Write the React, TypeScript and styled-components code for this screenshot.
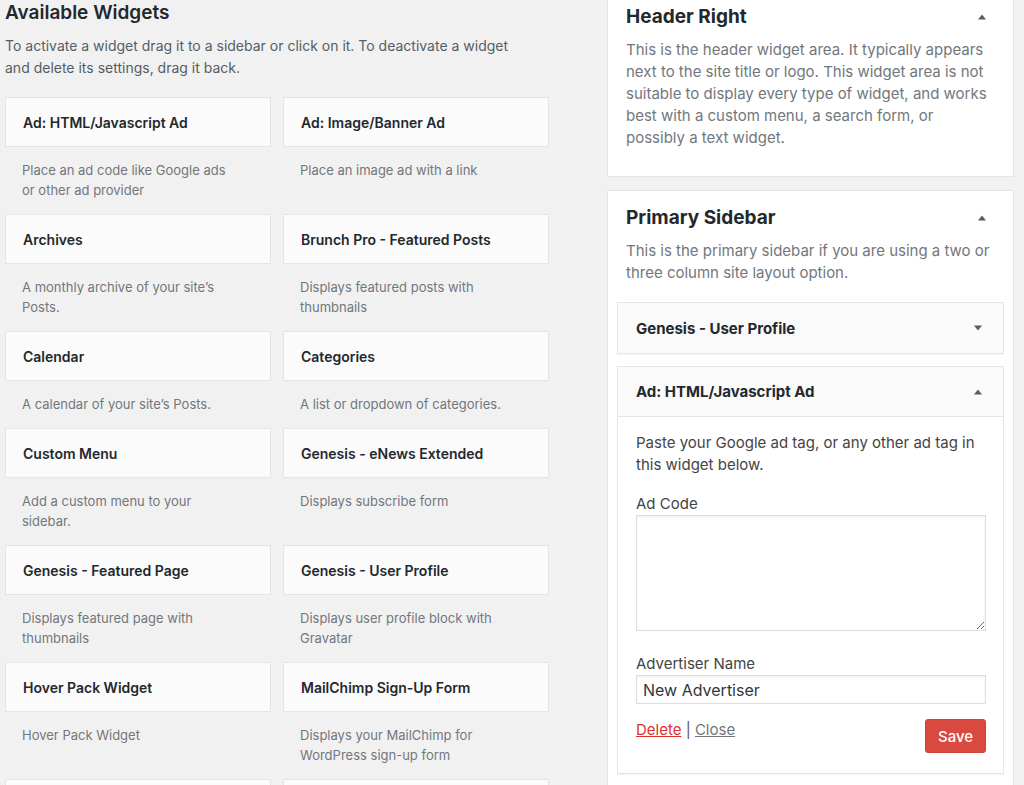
import React from "react";
import styled, { createGlobalStyle } from "styled-components";

const Global = createGlobalStyle`
  html, body { margin: 0; padding: 0; background: #f1f1f1; }
  body { font-family: Inter, "Noto Sans", "Liberation Sans", sans-serif; color: #23282d; overflow: hidden; height: 785px; }
  * { box-sizing: border-box; }
`;

const Page = styled.div`
  display: flex;
  align-items: flex-start;
  padding-left: 5px;
  height: 785px;
  overflow: hidden;
`;

const LeftCol = styled.div`
  width: 544px;
  flex: none;
`;

const Heading = styled.h2`
  margin: 0;
  font-size: 19px;
  line-height: 26px;
  font-weight: 600;
  color: #23282d;
`;

const Intro = styled.p`
  margin: 9px 0 18px;
  max-width: 520px;
  font-size: 14px;
  line-height: 22px;
  color: #555d66;
`;

const Grid = styled.div`
  display: grid;
  grid-template-columns: 266px 266px;
  column-gap: 12px;
`;

const Item = styled.div`
  display: flex;
  flex-direction: column;
`;

const Card = styled.div`
  height: 50px;
  background: #fbfbfb;
  border: 1px solid #e5e5e5;
  display: flex;
  align-items: center;
  padding: 0 17px;
  font-weight: 600;
  font-size: 14px;
  color: #23282d;
`;

const ItemDesc = styled.div`
  padding: 13px 37px 14px 17px;
  font-size: 13px;
  line-height: 20px;
  color: #72777c;
  min-height: 20px;
`;

const RightCol = styled.div`
  margin-left: 58px;
  margin-top: -11px;
  width: 407px;
  flex: none;
  display: flex;
  flex-direction: column;
  gap: 13px;
`;

const Panel = styled.div<{ $tail: number }>`
  background: #fff;
  border: 1px solid #e5e5e5;
  padding: 15px 9px ${(p) => p.$tail}px;
`;

const PanelHead = styled.div`
  display: flex;
  align-items: center;
  justify-content: space-between;
  padding: 0 17px 0 9px;
`;

const PanelTitle = styled.h3`
  margin: 0;
  font-size: 19px;
  line-height: 24px;
  font-weight: 700;
  color: #23282d;
`;

const PanelDesc = styled.p`
  margin: 10px 0 0;
  padding: 0 9px;
  font-size: 15px;
  line-height: 22px;
  color: #72777c;
`;

const WidgetList = styled.div`
  margin-top: 18px;
  display: flex;
  flex-direction: column;
  gap: 12px;
`;

const Widget = styled.div`
  border: 1px solid #e5e5e5;
  background: #fff;
  box-shadow: 0 1px 1px rgba(0, 0, 0, 0.04);
`;

const WidgetHead = styled.div<{ $open?: boolean }>`
  height: 50px;
  background: #fafafa;
  display: flex;
  align-items: center;
  justify-content: space-between;
  padding: 0 20px 0 18px;
  font-size: 15px;
  font-weight: 700;
  color: #23282d;
  border-bottom: ${(p) => (p.$open ? "1px solid #e5e5e5" : "none")};
`;

const WidgetBody = styled.div`
  padding: 15px 17px 20px 18px;
  display: flex;
  flex-direction: column;
`;

const BodyText = styled.p`
  margin: 0;
  font-size: 15px;
  line-height: 22px;
  color: #444;
`;

const Label = styled.label<{ $gap: number }>`
  display: block;
  margin-top: ${(p) => p.$gap}px;
  font-size: 15px;
  line-height: 22px;
  color: #444;
`;

const TextArea = styled.textarea`
  width: 350px;
  height: 116px;
  border: 1px solid #ddd;
  box-shadow: inset 0 1px 2px rgba(0, 0, 0, 0.07);
  font-family: inherit;
  font-size: 15px;
  margin: 0;
  display: block;
  resize: vertical;
  background: #fff;
`;

const Input = styled.input`
  width: 350px;
  height: 29px;
  border: 1px solid #ddd;
  box-shadow: inset 0 1px 2px rgba(0, 0, 0, 0.07);
  padding: 0 6px;
  font-family: inherit;
  font-size: 16px;
  color: #32373c;
  margin: 0;
  display: block;
`;

const Actions = styled.div`
  margin-top: 15px;
  display: flex;
  align-items: flex-start;
  justify-content: space-between;
  width: 350px;
`;

const Links = styled.div`
  font-size: 15px;
  line-height: 22px;
  color: #555;
`;

const Link = styled.a<{ $danger?: boolean }>`
  color: ${(p) => (p.$danger ? "#dc3232" : "#72777c")};
  text-decoration: underline;
  cursor: pointer;
`;

const SaveButton = styled.button`
  width: 61px;
  height: 34px;
  background: #d9493f;
  border: 1px solid #c9443a;
  border-radius: 3px;
  color: #fff;
  font-family: inherit;
  font-size: 15px;
  font-weight: 500;
  padding: 0;
`;

const Arrow = ({ down }: { down?: boolean }) => (
  <svg width="10" height="6" viewBox="0 0 10 6" aria-hidden="true">
    <path d={down ? "M1 0.5 L9 0.5 L5 5.5 Z" : "M1 5.5 L9 5.5 L5 0.5 Z"} fill="#555d66" />
  </svg>
);

const widgets: [string, string][] = [
  ["Ad: HTML/Javascript Ad", "Place an ad code like Google ads or other ad provider"],
  ["Ad: Image/Banner Ad", "Place an image ad with a link"],
  ["Archives", "A monthly archive of your site\u2019s Posts."],
  ["Brunch Pro - Featured Posts", "Displays featured posts with thumbnails"],
  ["Calendar", "A calendar of your site\u2019s Posts."],
  ["Categories", "A list or dropdown of categories."],
  ["Custom Menu", "Add a custom menu to your sidebar."],
  ["Genesis - eNews Extended", "Displays subscribe form"],
  ["Genesis - Featured Page", "Displays featured page with thumbnails"],
  ["Genesis - User Profile", "Displays user profile block with Gravatar"],
  ["Hover Pack Widget", "Hover Pack Widget"],
  ["MailChimp Sign-Up Form", "Displays your MailChimp for WordPress sign-up form"],
];

export default function App() {
  return (
    <>
      <Global />
      <Page>
        <LeftCol>
          <Heading>Available Widgets</Heading>
          <Intro>
            To activate a widget drag it to a sidebar or click on it. To deactivate a widget and delete its
            settings, drag it back.
          </Intro>
          <Grid>
            {widgets.map(([t, d]) => (
              <Item key={t}>
                <Card>{t}</Card>
                <ItemDesc>{d}</ItemDesc>
              </Item>
            ))}
            <Item>
              <Card />
            </Item>
            <Item>
              <Card />
            </Item>
          </Grid>
        </LeftCol>
        <RightCol>
          <Panel $tail={27}>
            <PanelHead>
              <PanelTitle>Header Right</PanelTitle>
              <Arrow />
            </PanelHead>
            <PanelDesc>
              This is the header widget area. It typically appears next to the site title or logo. This widget
              area is not suitable to display every type of widget, and works best with a custom menu, a search
              form, or possibly a text widget.
            </PanelDesc>
          </Panel>
          <Panel $tail={40}>
            <PanelHead>
              <PanelTitle>Primary Sidebar</PanelTitle>
              <Arrow />
            </PanelHead>
            <PanelDesc>
              This is the primary sidebar if you are using a two or three column site layout option.
            </PanelDesc>
            <WidgetList>
              <Widget>
                <WidgetHead>
                  Genesis - User Profile
                  <Arrow down />
                </WidgetHead>
              </Widget>
              <Widget>
                <WidgetHead $open>
                  Ad: HTML/Javascript Ad
                  <Arrow />
                </WidgetHead>
                <WidgetBody>
                  <BodyText>Paste your Google ad tag, or any other ad tag in this widget below.</BodyText>
                  <Label $gap={17}>Ad Code</Label>
                  <TextArea />
                  <Label $gap={22}>Advertiser Name</Label>
                  <Input defaultValue="New Advertiser" />
                  <Actions>
                    <Links>
                      <Link $danger>Delete</Link> | <Link>Close</Link>
                    </Links>
                    <SaveButton>Save</SaveButton>
                  </Actions>
                </WidgetBody>
              </Widget>
            </WidgetList>
          </Panel>
        </RightCol>
      </Page>
    </>
  );
}
